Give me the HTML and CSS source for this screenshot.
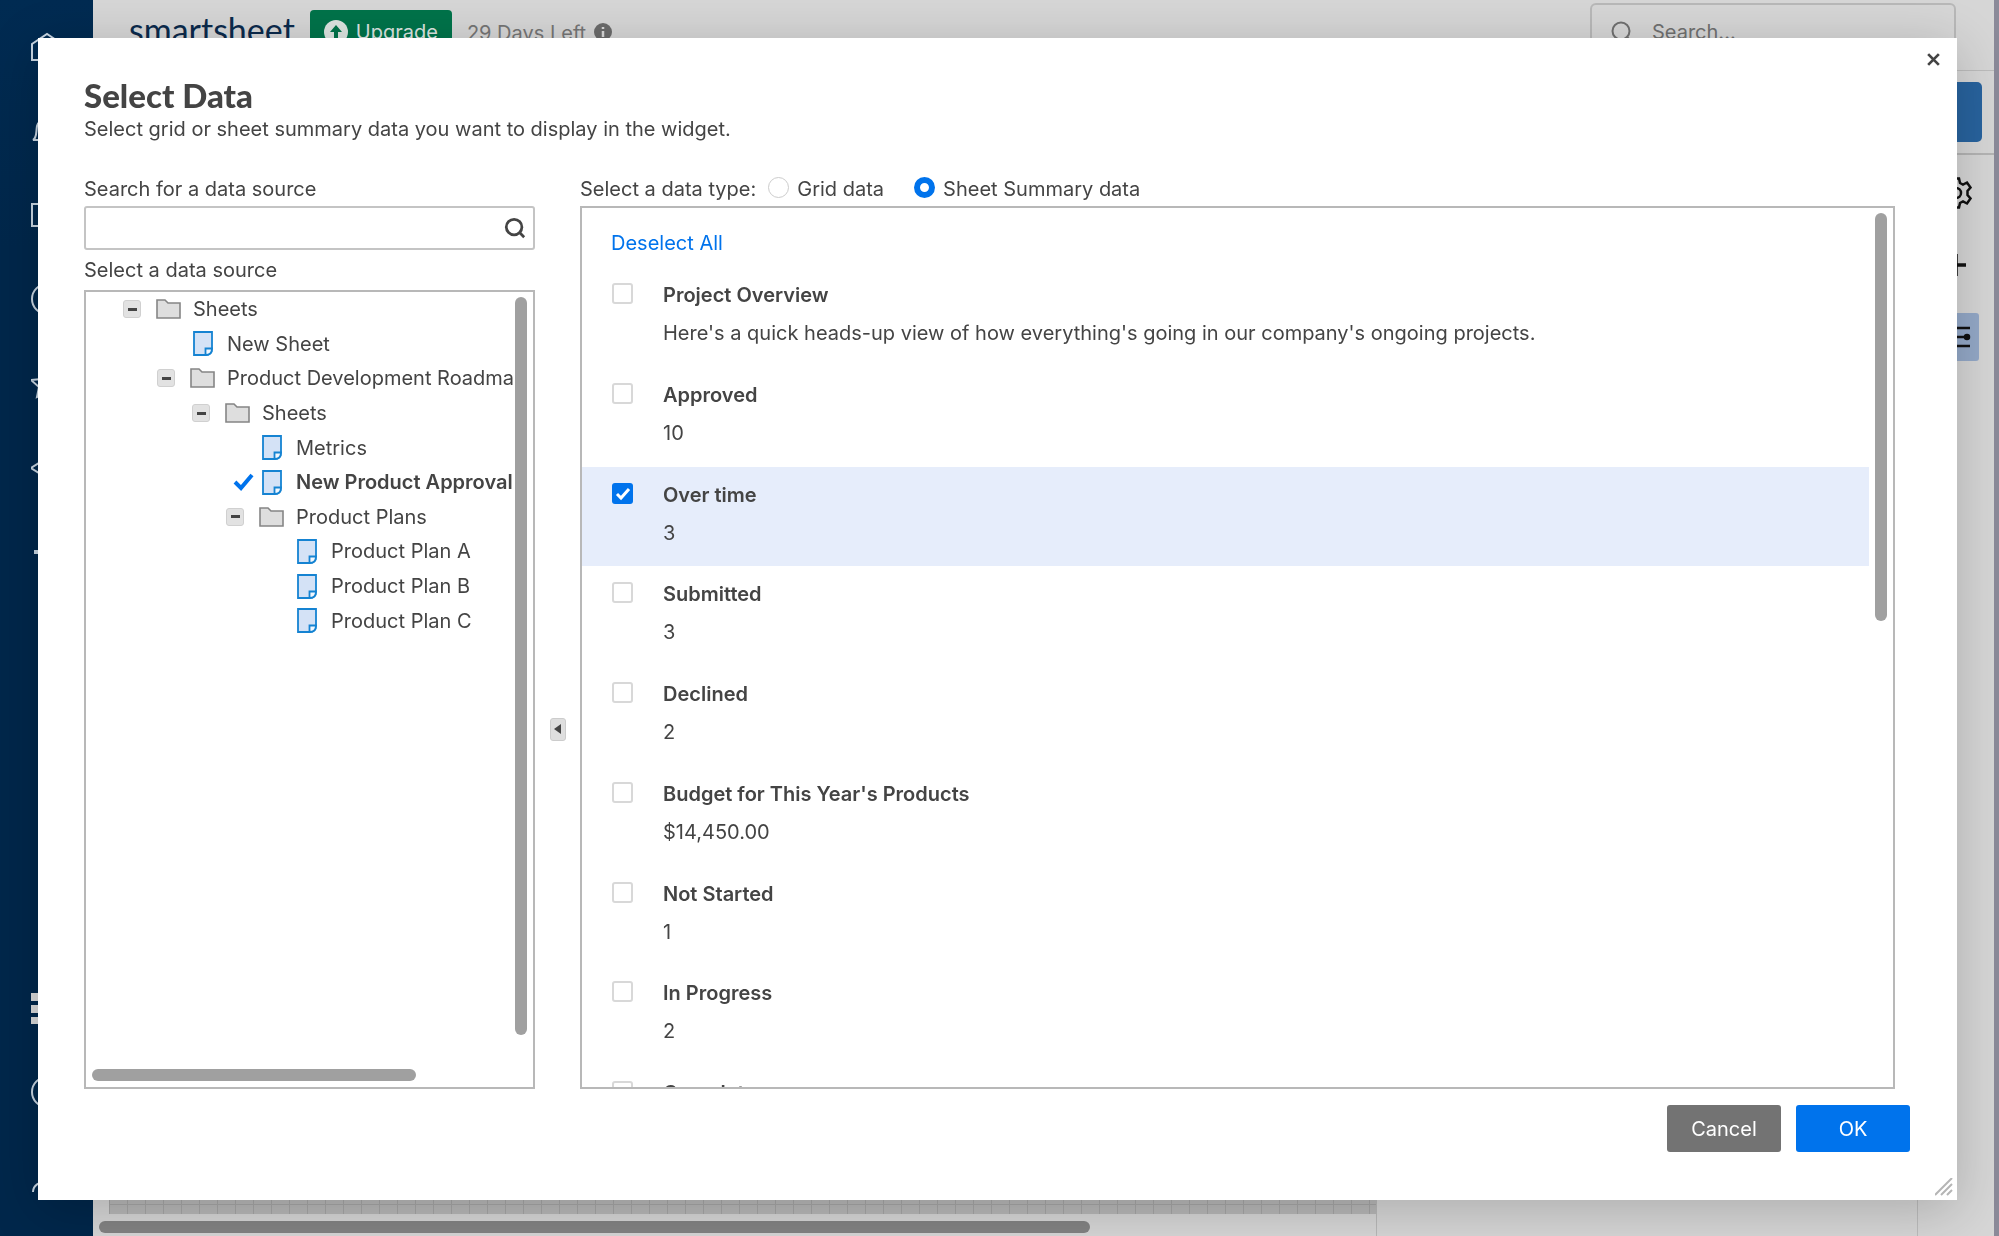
FILE: index.html
```html
<!DOCTYPE html>
<html lang="en">
<head>
  <title>Smartsheet - Select Data</title>
  <meta charset="UTF-8">
  <meta name="viewport" content="width=device-width, initial-scale=1">
  <link rel="stylesheet" href="styles.css">
</head>
<body>

  <!-- shared icons -->
  <svg class="sprite" aria-hidden="true">
    <symbol id="folder" viewBox="0 0 25 20">
      <path d="M1 19V1h8l3 3h12v15z" fill="#dedede" stroke="#858585" stroke-width="1.6"/>
    </symbol>
    <symbol id="sheet" viewBox="0 0 20 25">
      <path d="M1 1h18v16.500q0 6.500-6.500 6.500H1z" fill="#d4e2f6" stroke="#1583d2" stroke-width="1.8"/>
      <path d="M12.500 24v-6.500H19q0 6.500-6.500 6.500z" fill="#f2f7fd" stroke="#1583d2" stroke-width="1.8"/>
    </symbol>
    <symbol id="magnifier" viewBox="0 0 24 24">
      <circle cx="11" cy="11" r="8.500" fill="none" stroke="currentColor"/>
      <path d="M17 17l5 5" fill="none" stroke="currentColor"/>
    </symbol>
  </svg>

  <div class="app">
    <nav class="sidebar">
      <a href="#" aria-label="Home"><svg viewBox="0 0 32 32"><path d="M1 29V13L16 3l15 10v16z"/></svg></a>
      <a href="#" aria-label="Notifications"><svg viewBox="0 0 32 32"><path d="M2 25c4-2 3-8 4-14 1-4 4-6 10-6s9 2 10 6c1 6 0 12 4 14z"/></svg></a>
      <a href="#" aria-label="Browse"><svg viewBox="0 0 32 32"><path d="M1 5h12l3 4h15v18H1z"/></svg></a>
      <a href="#" aria-label="Recents"><svg viewBox="0 0 32 32"><circle cx="16" cy="16" r="15"/><path d="M16 8v9h7"/></svg></a>
      <a href="#" aria-label="Favorites"><svg viewBox="0 0 32 32"><path d="M0 13l11-1 5-10 5 10 11 1-8 7 2 10-10-5-10 5 2-10z"/></svg></a>
      <a href="#" aria-label="WorkApps"><svg viewBox="0 0 32 32"><path d="M0 17L16 7l16 10-16 10z"/></svg></a>
      <a href="#" aria-label="Create"><svg viewBox="0 0 32 32"><path d="M3 17h26M16 5v24" stroke-width="4"/></svg></a>
      <span class="sidebar-space"></span>
      <a href="#" aria-label="Launcher"><svg class="solid" viewBox="0 0 32 32"><path d="M0 1h9v8H0zM12 1h9v8h-9zM24 1h8v8h-8zM0 13h9v8H0zM12 13h9v8h-9zM24 13h8v8h-8zM0 25h9v7H0zM12 25h9v7h-9zM24 25h8v7h-8z"/></svg></a>
      <a href="#" aria-label="Help"><svg viewBox="0 0 32 32"><circle cx="16" cy="16" r="15"/></svg></a>
      <a href="#" aria-label="Account"><svg viewBox="0 0 32 32"><circle cx="16" cy="9" r="6"/><path d="M2 32c0-14 28-14 28 0"/></svg></a>
    </nav>

    <div class="workspace">
      <header class="topbar">
        <span class="logo">smartsheet</span>
        <button class="upgrade">
          <svg viewBox="0 0 24 24"><circle cx="12" cy="12" r="12" fill="#dce4e0"/><path d="M12 5l6 7h-4v6h-4v-6H6z" fill="#00734a"/></svg>
          Upgrade
        </button>
        <span class="trial">29 Days Left</span>
        <svg class="info" viewBox="0 0 18 18"><circle cx="9" cy="9" r="9" fill="#6b6b6b"/><path d="M9 4v2M9 8v6" stroke="#d8d8d8" stroke-width="2.500"/></svg>
        <div class="global-search">
          <svg viewBox="0 0 24 24"><use href="#magnifier"/></svg>
          <input type="text" placeholder="Search..." aria-label="Search">
        </div>
      </header>
      <div class="toolbar"><button class="add-widget" aria-label="Add widget"></button></div>
      <div class="board">
        <div class="canvas">
          <div class="canvas-grid"></div>
          <div class="canvas-scroll"><div class="canvas-thumb"></div></div>
        </div>
        <div class="widget-panel"></div>
        <div class="rail">
          <button aria-label="Settings"><svg viewBox="0 0 32 32"><path d="M13 1.500h6l1 4.500 3 1.500 4-2 3.500 5-3 3.500v4l3 3.500-3.500 5-4-2-3 1.500-1 4.500h-6l-1-4.500L9 24.500l-4 2-3.500-5 3-3.500v-4l-3-3.500 3.500-5 4 2L12 6z"/><circle cx="16" cy="16" r="5"/></svg></button>
          <button aria-label="Add"><svg viewBox="0 0 32 32"><path d="M6 16h20M16 5v22" stroke-width="3.500"/></svg></button>
          <button class="active" aria-label="Filter"><svg viewBox="0 0 32 32"><path d="M2 7h28M2 16h28M2 25h28"/><circle cx="10" cy="7" r="2"/><circle cx="27" cy="16" r="2"/><circle cx="10" cy="25" r="2"/></svg></button>
        </div>
      </div>
    </div>
  </div>

  <div class="modal" role="dialog" aria-labelledby="modalTitle">
    <button class="close" aria-label="Close"><svg viewBox="0 0 14 14"><path d="M2 2l10 10M12 2L2 12"/></svg></button>

    <h1 id="modalTitle">Select Data</h1>
    <p class="subtitle">Select grid or sheet summary data you want to display in the widget.</p>

    <div class="columns">
      <section class="source">
        <label class="field-label" for="sourceSearch">Search for a data source</label>
        <div class="source-search">
          <input id="sourceSearch" type="text">
          <svg viewBox="0 0 24 24"><use href="#magnifier"/></svg>
        </div>
        <h2 class="field-label tree-label">Select a data source</h2>
        <div class="panel tree-panel">
          <ul class="tree">
            <li class="level-0"><button class="toggle" aria-label="Collapse"></button><svg class="folder"><use href="#folder"/></svg>Sheets</li>
            <li class="level-1"><span class="mark"></span><svg class="sheet"><use href="#sheet"/></svg>New Sheet</li>
            <li class="level-1"><button class="toggle" aria-label="Collapse"></button><svg class="folder"><use href="#folder"/></svg>Product Development Roadmap</li>
            <li class="level-2"><button class="toggle" aria-label="Collapse"></button><svg class="folder"><use href="#folder"/></svg>Sheets</li>
            <li class="level-3"><span class="mark"></span><svg class="sheet"><use href="#sheet"/></svg>Metrics</li>
            <li class="level-3 selected"><span class="mark"><svg viewBox="0 0 21 18"><path d="M2 9l6 6L19 2"/></svg></span><svg class="sheet"><use href="#sheet"/></svg>New Product Approval</li>
            <li class="level-3"><button class="toggle" aria-label="Collapse"></button><svg class="folder"><use href="#folder"/></svg>Product Plans</li>
            <li class="level-4"><span class="mark"></span><svg class="sheet"><use href="#sheet"/></svg>Product Plan A</li>
            <li class="level-4"><span class="mark"></span><svg class="sheet"><use href="#sheet"/></svg>Product Plan B</li>
            <li class="level-4"><span class="mark"></span><svg class="sheet"><use href="#sheet"/></svg>Product Plan C</li>
          </ul>
          <div class="gutter tree-gutter"><div class="thumb tree-thumb"></div></div>
          <div class="gutter-x"><div class="thumb-x"></div></div>
        </div>
      </section>

      <button class="collapse" aria-label="Collapse data source"><svg viewBox="0 0 8 10"><path d="M7 0v10L0 5z"/></svg></button>

      <section class="data">
        <div class="types">
          <span>Select a data type:</span>
          <label><input type="radio" name="type">Grid data</label>
          <label><input type="radio" name="type" checked>Sheet Summary data</label>
        </div>
        <div class="panel data-panel">
          <div class="fields">
            <a class="deselect" href="#">Deselect All</a>
            <ul class="field-list">
              <li><input type="checkbox" id="f1"><label for="f1"><b>Project Overview</b><span>Here's a quick heads-up view of how everything's going in our company's ongoing projects.</span></label></li>
              <li><input type="checkbox" id="f2"><label for="f2"><b>Approved</b><span>10</span></label></li>
              <li class="checked"><input type="checkbox" id="f3" checked><label for="f3"><b>Over time</b><span>3</span></label></li>
              <li><input type="checkbox" id="f4"><label for="f4"><b>Submitted</b><span>3</span></label></li>
              <li><input type="checkbox" id="f5"><label for="f5"><b>Declined</b><span>2</span></label></li>
              <li><input type="checkbox" id="f6"><label for="f6"><b>Budget for This Year's Products</b><span>$14,450.00</span></label></li>
              <li><input type="checkbox" id="f7"><label for="f7"><b>Not Started</b><span>1</span></label></li>
              <li><input type="checkbox" id="f8"><label for="f8"><b>In Progress</b><span>2</span></label></li>
              <li><input type="checkbox" id="f9"><label for="f9"><b>Complete</b></label></li>
            </ul>
          </div>
          <div class="gutter"><div class="thumb data-thumb"></div></div>
        </div>
      </section>
    </div>

    <footer class="actions">
      <button class="cancel">Cancel</button>
      <button class="ok">OK</button>
    </footer>
    <svg class="resize" viewBox="0 0 18 18"><path d="M0 17L17 0M6 17L17 6M12 17l5-5"/></svg>
  </div>

</body>
</html>
```
FILE: styles.css
```css
* {
  box-sizing: border-box;
  margin: 0;
  padding: 0;
}

body {
  font-family: Inter, "Liberation Sans", sans-serif;
  font-size: 20px;
  line-height: 24px;
  color: #444;
  overflow: hidden;
}

button, input {
  font: inherit;
}

button {
  border: none;
  cursor: pointer;
}

ul {
  list-style: none;
}

b {
  font-weight: 600;
}

.sprite {
  display: none;
}

/* page behind the dialog */
.app {
  display: flex;
  height: 100vh;
  background: #d6d6d6;
  border-right: 5px solid #8b8a99;
}

.sidebar {
  width: 93px;
  flex: none;
  display: flex;
  flex-direction: column;
  align-items: center;
  gap: 52px;
  padding: 31px 0 44px;
  background: linear-gradient(#002b52, #00274b 20%);
}

.sidebar a {
  height: 32px;
}

.sidebar svg {
  display: block;
  width: 32px;
  height: 32px;
  fill: none;
  stroke: #c9d6e2;
  stroke-width: 2;
}

.sidebar .solid {
  fill: #d8d8d8;
  stroke: none;
}

.sidebar-space {
  flex: 1;
}

.workspace {
  flex: 1;
  display: flex;
  flex-direction: column;
}

.topbar {
  height: 71px;
  display: flex;
  align-items: flex-start;
  padding: 3px 38px 0 36px;
  border-bottom: 1px solid #bcbcbc;
}

.logo {
  font-family: Lato, sans-serif;
  font-size: 34px;
  line-height: 48px;
  padding-top: 3px;
  color: #0b2a4c;
}

.upgrade {
  display: flex;
  align-items: center;
  gap: 8px;
  height: 44px;
  margin: 7px 15px 0;
  padding: 0 14px;
  border-radius: 4px;
  background: #00734a;
  color: #dce4e0;
}

.upgrade svg {
  width: 24px;
  height: 24px;
}

.trial {
  margin-top: 18px;
  color: #757575;
}

.info {
  width: 18px;
  height: 18px;
  margin: 20px 0 0 8px;
}

.global-search {
  display: flex;
  align-items: center;
  gap: 18px;
  width: 366px;
  height: 58px;
  margin-left: auto;
  padding: 0 18px;
  border: 2px solid #b8b8b8;
  border-radius: 6px;
}

.global-search svg {
  flex: none;
  width: 24px;
  height: 24px;
  color: #707070;
  stroke-width: 2;
}

.global-search input {
  flex: 1;
  min-width: 0;
  border: none;
  background: none;
}

.global-search input::placeholder {
  color: #707070;
}

.toolbar {
  height: 84px;
  display: flex;
  justify-content: flex-end;
  padding: 11px 12px;
  border-bottom: 2px solid #b4b4b4;
}

.add-widget {
  width: 180px;
  height: 60px;
  border-radius: 5px;
  background: #28639e;
}

.board {
  flex: 1;
  display: flex;
}

.canvas {
  flex: 1;
  display: flex;
  flex-direction: column;
  border-right: 1px solid #b8b8b8;
}

.canvas-grid {
  flex: 1;
  margin-left: 16px;
  background:
    repeating-linear-gradient(90deg, #a6a6a6 0 1px, transparent 1px 18px),
    repeating-linear-gradient(0deg, #b8b8b8 0 9px, #a6a6a6 9px 10px, #b8b8b8 10px 18px);
}

.canvas-scroll {
  height: 22px;
  padding: 7px 6px 0;
}

.canvas-thumb {
  width: 78%;
  height: 12px;
  border-radius: 6px;
  background: #838383;
}

.widget-panel {
  width: 541px;
  border-right: 1px solid #bcbcbc;
}

.rail {
  width: 76px;
  display: flex;
  flex-direction: column;
  align-items: center;
  gap: 24px;
  padding-top: 14px;
}

.rail button {
  width: 46px;
  height: 48px;
  padding: 8px 7px;
  border-radius: 3px;
  background: none;
}

.rail .active {
  background: #94a9c8;
}

.rail svg {
  display: block;
  fill: none;
  stroke: #111;
  stroke-width: 2.5;
}

/* dialog */
.modal {
  position: fixed;
  inset: 38px 42px 36px 38px;
  display: flex;
  flex-direction: column;
  padding: 40px 47px 48px 46px;
  background: #fff;
  box-shadow: 0 10px 50px rgba(0, 0, 0, .2);
}

.close {
  position: absolute;
  top: 11px;
  right: 13px;
  width: 21px;
  height: 21px;
  padding: 3px;
  background: none;
}

.close svg {
  display: block;
  fill: none;
  stroke: #444;
  stroke-width: 2.5;
}

h1 {
  font-family: Lato, sans-serif;
  font-size: 33px;
  line-height: 34px;
  font-weight: 900;
}

.subtitle {
  padding-top: 5px;
}

.columns {
  flex: 1;
  min-height: 0;
  display: flex;
  margin: 36px 15px 16px 0;
}

.source {
  width: 451px;
  flex: none;
  display: flex;
  flex-direction: column;
}

.field-label {
  height: 29px;
  font-size: 20px;
  font-weight: 400;
}

.source-search {
  display: flex;
  align-items: center;
  height: 44px;
  padding: 0 7px;
  border: 2px solid #c4c4c4;
  border-radius: 3px;
}

.source-search input {
  flex: 1;
  min-width: 0;
  height: 100%;
  border: none;
  outline: none;
}

.source-search svg {
  width: 22px;
  height: 22px;
  stroke-width: 3;
}

.tree-label {
  height: 40px;
  padding-top: 8px;
}

.panel {
  flex: 1;
  min-height: 0;
  display: grid;
  border: 2px solid #b8b8b8;
  overflow: hidden;
}

.tree-panel {
  grid-template: 1fr 24px / 1fr 19px;
}

.tree {
  display: grid;
  grid-auto-rows: 1fr;
  height: 346px;
  overflow: hidden;
}

.tree li {
  display: flex;
  align-items: center;
  white-space: nowrap;
}

.level-0 { padding-left: 37px; }
.level-1 { padding-left: 71px; }
.level-2 { padding-left: 106px; }
.level-3 { padding-left: 140px; }
.level-4 { padding-left: 175px; }

.selected {
  font-weight: 600;
}

.toggle {
  display: grid;
  place-items: center;
  width: 18px;
  height: 18px;
  margin-right: 15px;
  border: 1px solid #d0d0d0;
  border-radius: 3px;
  background: #e2e2e2;
}

.toggle::before {
  content: "";
  width: 9px;
  height: 3px;
  background: #444;
}

.folder, .sheet {
  flex: none;
  width: 25px;
  height: 20px;
  margin-right: 12px;
}

.sheet {
  width: 20px;
  height: 25px;
  margin-right: 14px;
}

.mark {
  flex: none;
  width: 36px;
  padding-left: 7px;
}

.mark svg {
  display: block;
  width: 21px;
  height: 18px;
  fill: none;
  stroke: #0073ec;
  stroke-width: 4;
}

.gutter {
  padding: 5px 6px;
}

.tree-gutter {
  padding-left: 1px;
}

.thumb {
  width: 12px;
  border-radius: 6px;
  background: #a0a0a0;
}

.tree-thumb {
  height: 97%;
}

.data-thumb {
  height: 47%;
}

.gutter-x {
  padding: 6px;
}

.thumb-x {
  width: 78%;
  height: 12px;
  border-radius: 6px;
  background: #a0a0a0;
}

.collapse {
  align-self: center;
  width: 16px;
  height: 23px;
  margin: 192px 14px 0 15px;
  padding: 5px 3px;
  border: 1px solid #ccc;
  border-radius: 3px;
  background: #dedede;
}

.collapse svg {
  display: block;
  fill: #444;
}

.data {
  flex: 1;
  min-width: 0;
  display: flex;
  flex-direction: column;
}

.types {
  display: flex;
  height: 29px;
}

.types label {
  display: flex;
  margin-left: 12px;
}

.types label + label {
  margin-left: 30px;
}

input[type="radio"], input[type="checkbox"] {
  appearance: none;
  flex: none;
  width: 21px;
  height: 21px;
  border: 1px solid #ccc;
  background: #fff;
}

input[type="radio"] {
  margin-right: 8px;
  border-radius: 50%;
}

input[type="radio"]:checked {
  border: 6px solid #0073ec;
}

input[type="checkbox"] {
  margin-top: 16px;
  border: 2px solid #d8d8d8;
  border-radius: 3px;
}

input[type="checkbox"]:checked {
  border: none;
  background: #0073ec url("data:image/svg+xml,%3Csvg xmlns='http://www.w3.org/2000/svg' viewBox='0 0 21 21'%3E%3Cpath d='M5 11l4 4 8-9' fill='none' stroke='white' stroke-width='3'/%3E%3C/svg%3E");
}

.data-panel {
  grid-template: minmax(0, 1fr) / 1fr 24px;
}

.fields {
  min-width: 0;
}

.deselect {
  display: block;
  padding: 23px 29px 12px;
  color: #0073ec;
  text-decoration: none;
}

.field-list {
  display: grid;
  grid-auto-rows: 1fr;
  height: 898px;
}

.field-list li {
  display: flex;
  gap: 30px;
  padding-left: 30px;
}

.field-list .checked {
  background: #e6edfb;
}

.field-list label {
  display: flex;
  flex-direction: column;
  gap: 14px;
  padding-top: 16px;
}

.actions {
  display: flex;
  justify-content: flex-end;
  gap: 15px;
}

.actions button {
  width: 114px;
  height: 47px;
  border-radius: 3px;
  color: #fff;
}

.cancel {
  background: #737373;
}

.ok {
  background: #0073ec;
}

.resize {
  position: absolute;
  right: 4px;
  bottom: 4px;
  width: 18px;
  height: 18px;
  stroke: #b5b5b5;
  stroke-width: 2;
}
```
